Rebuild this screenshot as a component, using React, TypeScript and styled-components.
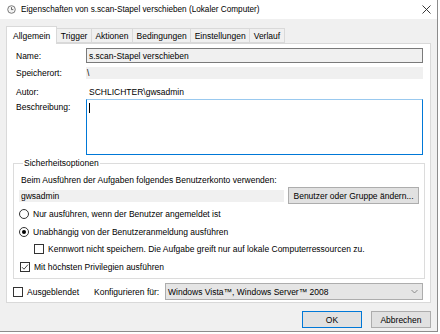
import styled, { createGlobalStyle } from 'styled-components'

const GlobalStyle = createGlobalStyle`
  html, body {
    margin: 0;
    padding: 0;
    background: #ffffff;
  }
  body {
    font-family: "Liberation Sans", Arial, sans-serif;
    font-size: 8.5px;
    color: #000;
  }
  * { box-sizing: border-box; }
`

const Window = styled.div`
  width: 438px;
  height: 332px;
  border-right: 1px solid #8c8c8c;
  border-bottom: 1px solid #8c8c8c;
  background: #f0f0f0;
  display: flex;
  flex-direction: column;
`

const TitleBar = styled.div`
  height: 19px;
  background: #fff;
  display: flex;
  align-items: center;
  padding: 0 6px 0 7px;
  gap: 5px;
  font-size: 8.2px;
`

const Title = styled.span`
  flex: 1;
  white-space: nowrap;
`

const Body = styled.div`
  flex: 1;
  padding: 7px 6px 0 6px;
  display: flex;
  flex-direction: column;
`

const TabStrip = styled.div`
  display: flex;
  align-items: flex-end;
  height: 17px;
  position: relative;
  z-index: 1;
`

const Tab = styled.div<{ $active?: boolean }>`
  height: ${p => (p.$active ? '18px' : '15px')};
  margin-bottom: ${p => (p.$active ? '-1px' : '0')};
  padding: 0 ${p => (p.$active ? '6px' : '3.5px')};
  background: ${p => (p.$active ? '#fff' : '#f0f0f0')};
  border: 1px solid #d9d9d9;
  border-bottom: ${p => (p.$active ? 'none' : '1px solid #d9d9d9')};
  margin-left: ${p => (p.$active ? '0' : '-1px')};
  display: flex;
  align-items: center;
  white-space: nowrap;
  &:first-child { margin-left: 0; }
`

const Panel = styled.div`
  height: 260px;
  background: #fff;
  border: 1px solid #d9d9d9;
  padding: 0 6px 0 6px;
  display: flex;
  flex-direction: column;
`

const FormRow = styled.div<{ $top: number; $h: number }>`
  margin-top: ${p => p.$top}px;
  height: ${p => p.$h}px;
  display: grid;
  grid-template-columns: 73px 1fr;
  align-items: center;
`

const Label = styled.span<{ $alignTop?: boolean }>`
  padding-left: 3px;
  align-self: ${p => (p.$alignTop ? 'start' : 'center')};
  padding-top: ${p => (p.$alignTop ? '3px' : '0')};
`

const ReadField = styled.div<{ $bordered?: boolean }>`
  height: 100%;
  background: #f0f0f0;
  border: ${p => (p.$bordered ? '1px solid #7a7a7a' : 'none')};
  display: flex;
  align-items: center;
  padding-left: ${p => (p.$bordered ? '2px' : '1px')};
  margin-right: 1px;
`

const PlainValue = styled.span`
  padding-left: 3px;
`

const TextArea = styled.div`
  height: 100%;
  border: 1px solid #0078d7;
  border-top-color: #99c9ef;
  margin-right: 1px;
  padding: 3px 2px;
`

const Caret = styled.span`
  display: block;
  width: 1px;
  height: 10px;
  background: #000;
`

const Group = styled.fieldset`
  margin: 3px 1px 0 0;
  padding: 0 0 5px 5px;
  border: 1px solid #dcdcdc;
  display: flex;
  flex-direction: column;
`

const Legend = styled.legend`
  margin-left: 4px;
  padding: 0 1px;
  line-height: 11px;
`

const Line = styled.div<{ $top: number; $indent?: number }>`
  margin-top: ${p => p.$top}px;
  margin-left: ${p => p.$indent ?? 0}px;
  height: 13px;
  display: flex;
  align-items: center;
  gap: 4px;
  white-space: nowrap;
`

const AccountRow = styled.div`
  margin-top: 1px;
  height: 17px;
  display: flex;
  align-items: center;
  gap: 4px;
  padding-right: 5px;
`

const AccountField = styled.div`
  width: 265px;
  height: 12px;
  background: #f0f0f0;
  display: flex;
  align-items: center;
  padding-left: 2px;
`

const Button = styled.div<{ $default?: boolean; $w?: number }>`
  height: 17px;
  width: ${p => (p.$w ? `${p.$w}px` : 'auto')};
  padding: 0 4px;
  background: #e1e1e1;
  border: 1px solid ${p => (p.$default ? '#0078d7' : '#adadad')};
  display: flex;
  align-items: center;
  justify-content: center;
  white-space: nowrap;
`

const Box = styled.span<{ $round?: boolean }>`
  width: 10px;
  height: 10px;
  flex: none;
  border: 1px solid #333;
  border-radius: ${p => (p.$round ? '50%' : '0')};
  background: #fff;
  display: flex;
  align-items: center;
  justify-content: center;
`

const Dot = styled.span`
  width: 4px;
  height: 4px;
  border-radius: 50%;
  background: #000;
`

const BottomRow = styled.div`
  margin-top: 4px;
  height: 17px;
  display: flex;
  align-items: center;
  padding-right: 1px;
`

const CheckLabel = styled.div`
  display: flex;
  align-items: center;
  gap: 4px;
  width: 81px;
`

const ConfigLabel = styled.span`
  width: 71px;
`

const Select = styled.div`
  flex: 1;
  height: 17px;
  background: #e5e5e5;
  border: 1px solid #adadad;
  display: flex;
  align-items: center;
  justify-content: space-between;
  padding: 0 4px 0 2px;
`

const Footer = styled.div`
  margin-top: 8px;
  display: flex;
  justify-content: flex-end;
  gap: 9px;
`

function ClockIcon () {
  return <svg width="9" height="9" viewBox="0 0 9 9">
    <circle cx="4.5" cy="4.5" r="3.8" fill="#f4f4f4" stroke="#6d6d6d" strokeWidth="0.9" />
    <path d="M4.5 2.2 V4.6 H6.3" fill="none" stroke="#444" strokeWidth="0.8" />
  </svg>
}

function CloseIcon () {
  return <svg width="9" height="9" viewBox="0 0 9 9">
    <path d="M0.5 0.5 L8.5 8.5 M8.5 0.5 L0.5 8.5" stroke="#222" strokeWidth="0.9" />
  </svg>
}

function Check ({ checked }: { checked?: boolean }) {
  return <Box>
    {checked && <svg width="8" height="8" viewBox="0 0 8 8">
      <path d="M1 4.2 L3 6.2 L7 1.6" fill="none" stroke="#333" strokeWidth="0.9" />
    </svg>}
  </Box>
}

function Radio ({ checked }: { checked?: boolean }) {
  return <Box $round>{checked && <Dot />}</Box>
}

function Chevron () {
  return <svg width="7" height="5" viewBox="0 0 7 5">
    <path d="M0.5 1 L3.5 4 L6.5 1" fill="none" stroke="#777" strokeWidth="0.8" />
  </svg>
}

const tabs = ['Allgemein', 'Trigger', 'Aktionen', 'Bedingungen', 'Einstellungen', 'Verlauf']

export default function App () {
  return <>
    <GlobalStyle />
    <Window>
      <TitleBar>
        <ClockIcon />
        <Title>Eigenschaften von s.scan-Stapel verschieben (Lokaler Computer)</Title>
        <CloseIcon />
      </TitleBar>
      <Body>
        <TabStrip>
          {tabs.map((t, i) => <Tab key={t} $active={i === 0}>{t}</Tab>)}
        </TabStrip>
        <Panel>
          <FormRow $top={4} $h={15}>
            <Label>Name:</Label>
            <ReadField $bordered>s.scan-Stapel verschieben</ReadField>
          </FormRow>
          <FormRow $top={4} $h={12}>
            <Label>Speicherort:</Label>
            <ReadField>\</ReadField>
          </FormRow>
          <FormRow $top={5} $h={15}>
            <Label>Autor:</Label>
            <PlainValue>SCHLICHTER\gwsadmin</PlainValue>
          </FormRow>
          <FormRow $top={0} $h={56}>
            <Label $alignTop>Beschreibung:</Label>
            <TextArea><Caret /></TextArea>
          </FormRow>
          <Group>
            <Legend>Sicherheitsoptionen</Legend>
            <Line $top={4} $indent={2}>Beim Ausführen der Aufgaben folgendes Benutzerkonto verwenden:</Line>
            <AccountRow>
              <AccountField>gwsadmin</AccountField>
              <Button $w={131}>Benutzer oder Gruppe ändern...</Button>
            </AccountRow>
            <Line $top={3}><Radio />Nur ausführen, wenn der Benutzer angemeldet ist</Line>
            <Line $top={5}><Radio checked />Unabhängig von der Benutzeranmeldung ausführen</Line>
            <Line $top={4} $indent={15}><Check />Kennwort nicht speichern. Die Aufgabe greift nur auf lokale Computerressourcen zu.</Line>
            <Line $top={5} $indent={1}><Check checked />Mit höchsten Privilegien ausführen</Line>
          </Group>
          <BottomRow>
            <CheckLabel><Check />Ausgeblendet</CheckLabel>
            <ConfigLabel>Konfigurieren für:</ConfigLabel>
            <Select>
              <span>Windows Vista™, Windows Server™ 2008</span>
              <Chevron />
            </Select>
          </BottomRow>
        </Panel>
        <Footer>
          <Button $default $w={60}>OK</Button>
          <Button $w={60}>Abbrechen</Button>
        </Footer>
      </Body>
    </Window>
  </>
}
